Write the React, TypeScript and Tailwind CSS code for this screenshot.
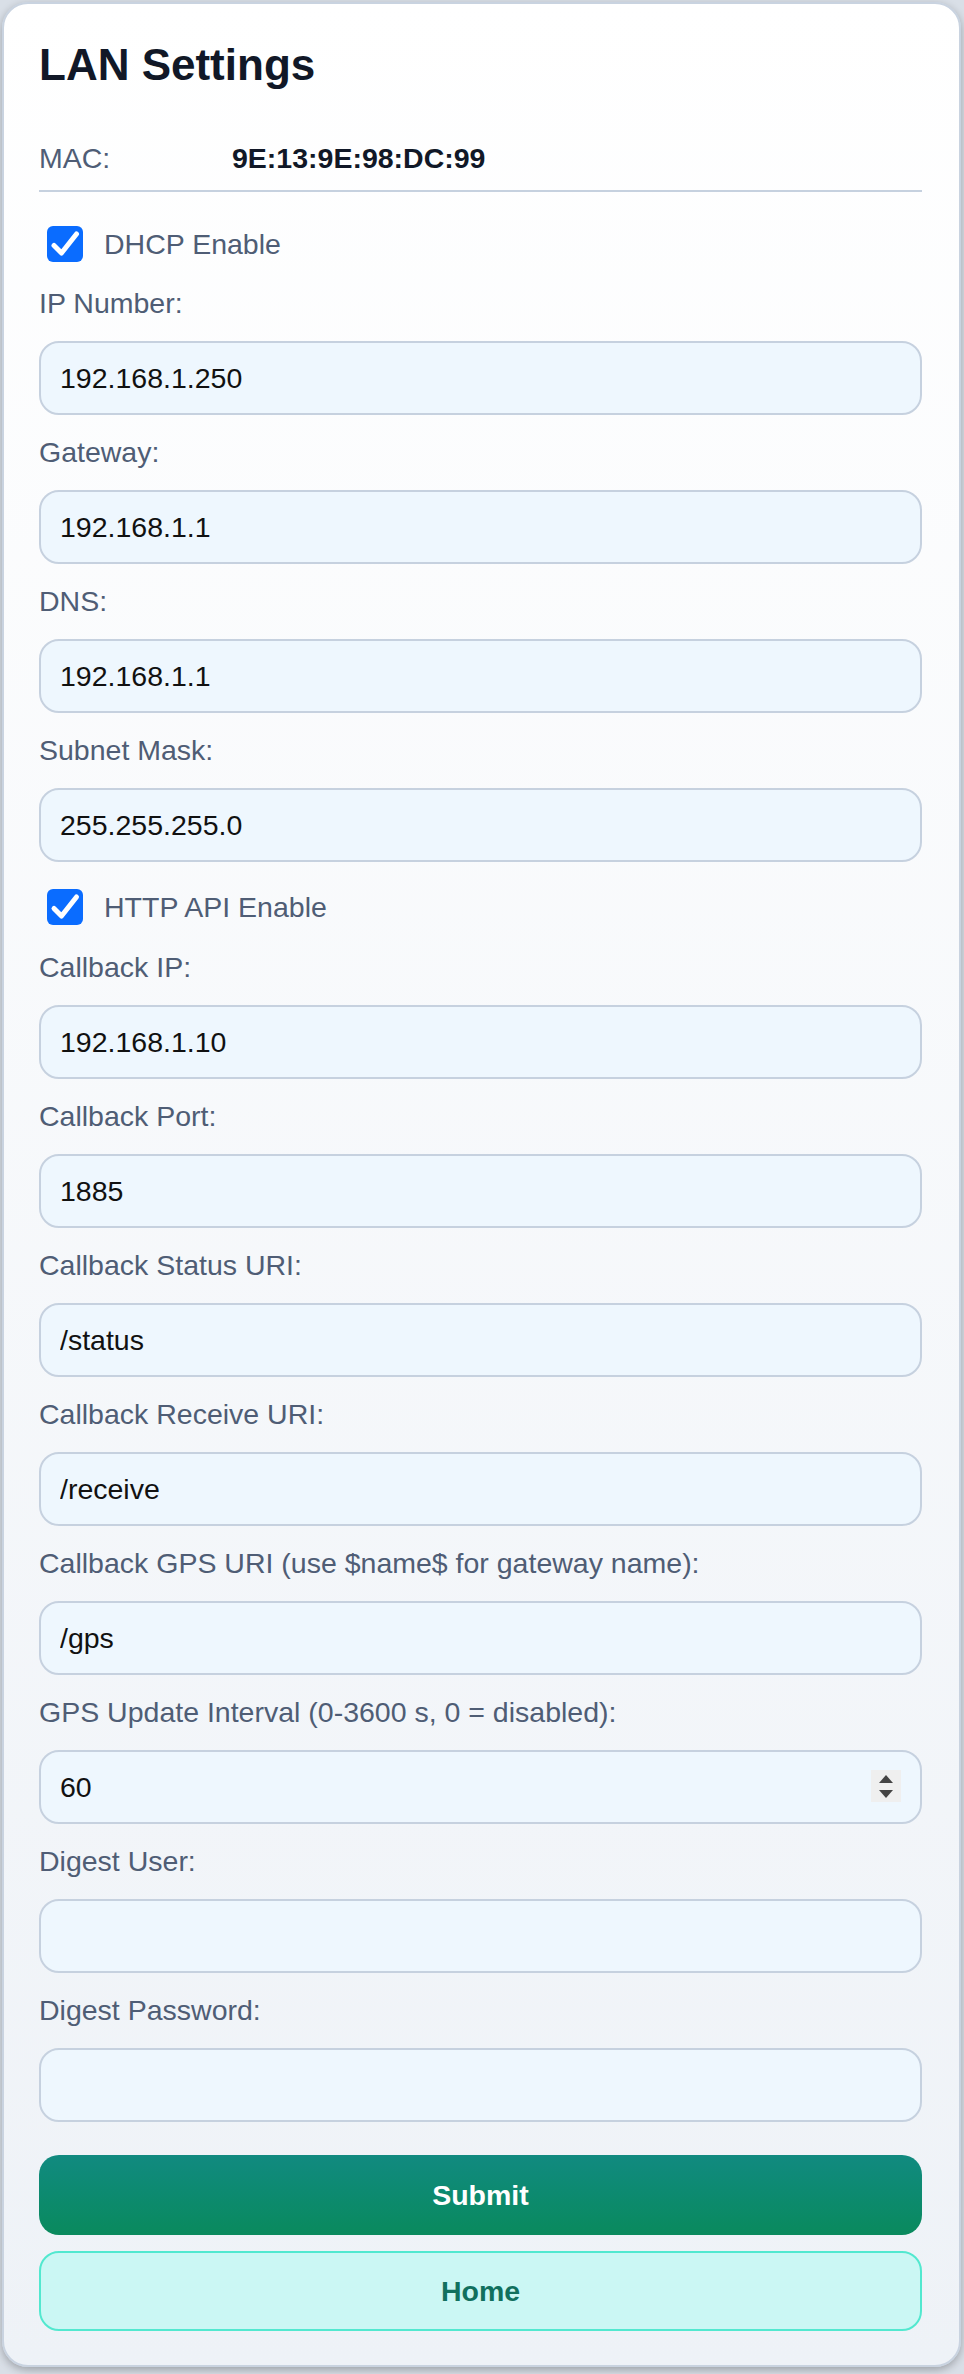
import { useState } from "react";

interface Field {
  label: string;
  value: string;
  type?: string;
}

const lanFields: Field[] = [
  { label: "IP Number:", value: "192.168.1.250" },
  { label: "Gateway:", value: "192.168.1.1" },
  { label: "DNS:", value: "192.168.1.1" },
  { label: "Subnet Mask:", value: "255.255.255.0" },
];

const apiFields: Field[] = [
  { label: "Callback IP:", value: "192.168.1.10" },
  { label: "Callback Port:", value: "1885" },
  { label: "Callback Status URI:", value: "/status" },
  { label: "Callback Receive URI:", value: "/receive" },
  { label: "Callback GPS URI (use $name$ for gateway name):", value: "/gps" },
  { label: "GPS Update Interval (0-3600 s, 0 = disabled):", value: "60", type: "number" },
  { label: "Digest User:", value: "" },
  { label: "Digest Password:", value: "", type: "password" },
];

function CheckRow({ label, checked, onToggle, className }: { label: string; checked: boolean; onToggle: () => void; className: string }) {
  return (
    <label className={`flex h-[36px] items-center cursor-pointer ${className}`}>
      <span
        onClick={onToggle}
        className={`ml-[8px] flex h-[36px] w-[36px] items-center justify-center rounded-[6px] ${
          checked ? "bg-[#0a6cff]" : "bg-white border-2 border-[#767676]"
        }`}
      >
        {checked && (
          <svg viewBox="0 0 36 36" className="h-[36px] w-[36px]">
            <path d="M7 19.5 L14.5 27 L29.5 8" fill="none" stroke="#fff" strokeWidth="5" strokeLinecap="round" strokeLinejoin="round" />
          </svg>
        )}
      </span>
      <span className="ml-[21px] text-[28.5px] leading-[43px] text-[#4f5d75]">{label}</span>
    </label>
  );
}

function FormField({ field }: { field: Field }) {
  return (
    <div className="mb-[16px]">
      <label className="mb-[16px] block text-[28.5px] leading-[43px] text-[#4f5d75]">{field.label}</label>
      <div className="relative">
        <input
          type={field.type === "password" ? "password" : "text"}
          defaultValue={field.value}
          className="block h-[74px] w-full rounded-[20px] border-2 border-[#c6d1df] bg-[#eef7fe] px-[19px] text-[28.5px] text-[#111] outline-none"
        />
        {field.type === "number" && (
          <div className="absolute right-[21px] top-[20px] flex h-[32px] w-[30px] flex-col items-center justify-center gap-[7px] bg-[#efefef]">
            <svg viewBox="0 0 14 8" className="h-[8px] w-[14px]">
              <path d="M7 0 L14 8 L0 8 Z" fill="#444" />
            </svg>
            <svg viewBox="0 0 14 8" className="h-[8px] w-[14px]">
              <path d="M0 0 L14 0 L7 8 Z" fill="#444" />
            </svg>
          </div>
        )}
      </div>
    </div>
  );
}

export default function App() {
  const [dhcp, setDhcp] = useState(true);
  const [httpApi, setHttpApi] = useState(true);

  return (
    <div className="min-h-[2374px] bg-[#d9dfe7] pl-[2px] pt-[2px] font-['Liberation_Sans',Arial,sans-serif]">
      <div className="w-[959px] rounded-[26px] border-2 border-[#c9d3e0] bg-gradient-to-b from-white to-[#eef2f7] pb-[34px] pl-[35px] pr-[37px] pt-[35px] shadow-[0_3px_8px_rgba(0,0,0,0.28)]">
        <h2 className="text-[44px] font-bold leading-[52px] text-[#111827]">LAN Settings</h2>

        {/* MAC address row */}
        <div className="mt-[46px] flex border-b-2 border-[#c6d1df] pb-[10px]">
          <span className="w-[193px] text-[28.5px] leading-[43px] text-[#4f5d75]">MAC:</span>
          <span className="text-[28.5px] font-bold leading-[43px] text-[#111827]">9E:13:9E:98:DC:99</span>
        </div>

        <CheckRow label="DHCP Enable" checked={dhcp} onToggle={() => setDhcp(!dhcp)} className="mt-[34px] mb-[20px]" />

        {lanFields.map((f) => (
          <FormField key={f.label} field={f} />
        ))}

        {/* margins collapse with the field above, so this is the full gap */}
        <CheckRow label="HTTP API Enable" checked={httpApi} onToggle={() => setHttpApi(!httpApi)} className="mt-[27px] mb-[21px]" />

        {apiFields.map((f) => (
          <FormField key={f.label} field={f} />
        ))}

        <button className="mt-[33px] block h-[80px] w-full rounded-[20px] bg-gradient-to-b from-[#118a80] to-[#0a8a5d] text-[28.5px] font-bold text-white">
          Submit
        </button>
        <button className="mt-[16px] block h-[80px] w-full rounded-[20px] border-2 border-[#52e8cf] bg-[#cbf7f4] text-[28.5px] font-bold text-[#11705e]">
          Home
        </button>
      </div>
    </div>
  );
}
